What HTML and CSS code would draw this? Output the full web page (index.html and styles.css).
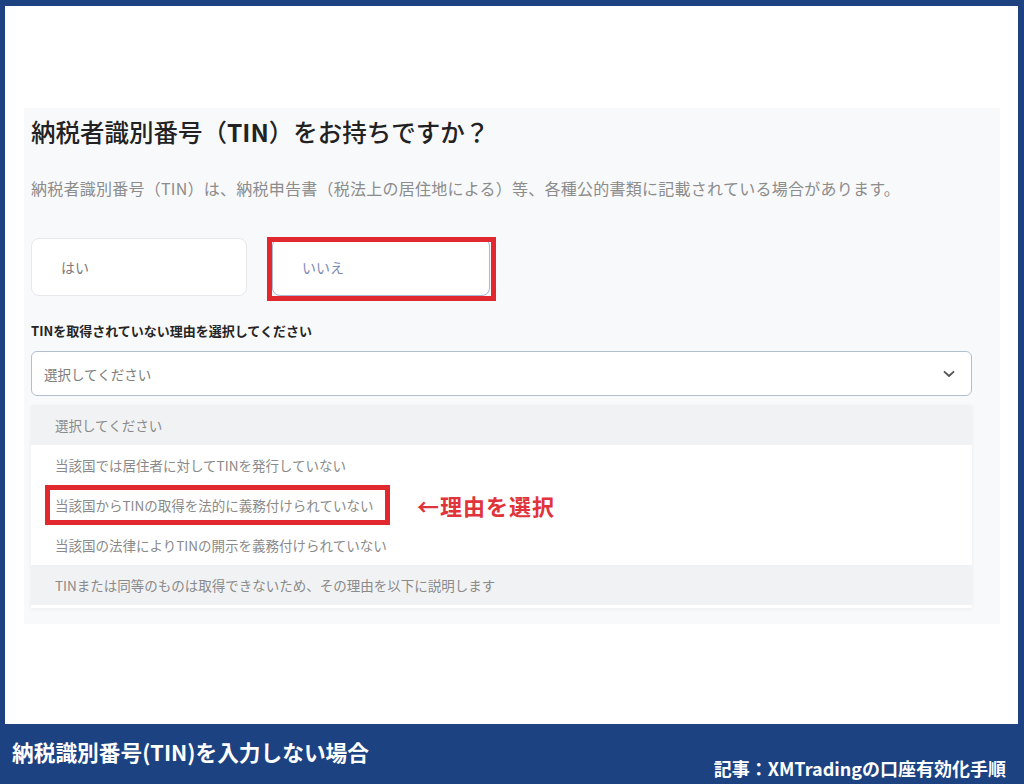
FILE: index.html
```html
<!DOCTYPE html>
<html lang="ja">
<head>
<meta charset="utf-8">
<title>納税識別番号(TIN)を入力しない場合</title>
<link rel="stylesheet" href="styles.css">
</head>
<body>
<div class="frame">
  <div class="canvas">
    <section class="card">
      <h1 class="title">納税者識別番号（<b class="tin">TIN</b>）をお持ちですか？</h1>
      <p class="desc">納税者識別番号（TIN）は、納税申告書（税法上の居住地による）等、各種公的書類に記載されている場合があります。</p>
      <div class="choices">
        <div class="choice">はい</div>
        <div class="choice selected">いいえ<span class="mark"></span></div>
      </div>
      <div class="label">TINを取得されていない理由を選択してください</div>
      <div class="select">
        <span class="placeholder">選択してください</span>
        <svg class="chev" width="12" height="8" viewBox="0 0 12 8"><polyline points="1.5,1.8 6,6 10.5,1.8" fill="none" stroke="#555" stroke-width="1.8" stroke-linecap="round" stroke-linejoin="round"/></svg>
      </div>
      <ul class="options">
        <li class="opt gray">選択してください</li>
        <li class="opt">当該国では居住者に対してTINを発行していない</li>
        <li class="opt marked">当該国からTINの取得を法的に義務付けられていない<span class="mark-box"></span><span class="note">←理由を選択</span></li>
        <li class="opt">当該国の法律によりTINの開示を義務付けられていない</li>
        <li class="opt gray">TINまたは同等のものは取得できないため、その理由を以下に説明します</li>
      </ul>
    </section>
  </div>
  <div class="bar">
    <span class="bar-title">納税識別番号(TIN)を入力しない場合</span>
    <span class="bar-sub">記事：XMTradingの口座有効化手順</span>
  </div>
</div>
</body>
</html>
```
FILE: styles.css
```css
html, body {
  margin: 0;
  padding: 0;
}
body {
  font-family: "Noto Sans CJK JP", "Noto Sans", sans-serif;
  background: #1d4282;
}
.frame {
  width: 1024px;
  height: 784px;
  background: #1d4282;
  display: flex;
  flex-direction: column;
  overflow: hidden;
}
.canvas {
  margin: 6px 6px 0 5px;
  height: 718px;
  background: #ffffff;
  padding: 102px 0 0 19px;
  box-sizing: border-box;
}
.card {
  width: 976px;
  height: 516px;
  box-sizing: border-box;
  background: #f8f9fb;
  padding: 8px 28px 16px 7px;
}
.title {
  margin: 0;
  font-size: 24.5px;
  line-height: 32px;
  font-weight: 500;
  color: #222222;
}
.tin {
  font-weight: 700;
}
.desc {
  margin: 28px 0 0;
  font-size: 16px;
  line-height: 24px;
  letter-spacing: 0.25px;
  color: #8c8c8c;
}
.choices {
  margin-top: 38px;
  display: flex;
  gap: 25px;
}
.choice {
  position: relative;
  width: 216px;
  height: 58px;
  box-sizing: border-box;
  border: 1px solid #e6e8ec;
  border-radius: 8px;
  background: #ffffff;
  padding-left: 29px;
  font-size: 14px;
  line-height: 56px;
  color: #7a7a7a;
}
.choice.selected {
  width: 218px;
  color: #7d89b6;
  border-color: #aab6d6;
}
.mark {
  position: absolute;
  left: -6px;
  top: -2px;
  width: 229px;
  height: 64px;
  box-sizing: border-box;
  border: 5px solid #e0282e;
}
.label {
  margin-top: 25px;
  font-size: 13px;
  line-height: 20px;
  font-weight: 700;
  color: #252525;
}
.select {
  margin-top: 10px;
  height: 45px;
  box-sizing: border-box;
  border: 1px solid #b3c0cc;
  border-radius: 6px;
  background: #ffffff;
  display: flex;
  align-items: center;
  justify-content: space-between;
  padding: 0 16px 0 12px;
}
.placeholder {
  font-size: 13.5px;
  color: #7c7c7c;
}
.options {
  list-style: none;
  margin: 9px 0 0;
  padding: 0 0 3px;
  background: #ffffff;
  box-shadow: 0 1px 4px rgba(0, 0, 0, 0.05);
}
.opt {
  position: relative;
  height: 40px;
  line-height: 40px;
  padding-left: 24px;
  font-size: 13.5px;
  color: #8a8a8a;
}
.opt.gray {
  background: #f1f2f4;
}
.mark-box {
  position: absolute;
  left: 14px;
  top: 0;
  width: 345px;
  height: 40px;
  box-sizing: border-box;
  border: 5px solid #e0282e;
}
.note {
  position: absolute;
  left: 386px;
  top: 0;
  line-height: 40px;
  font-size: 22px;
  font-weight: 700;
  letter-spacing: 1px;
  color: #e0333a;
}
.bar {
  height: 60px;
  display: flex;
  justify-content: space-between;
  align-items: flex-start;
  padding: 0 18px 0 12px;
  color: #ffffff;
  font-weight: 700;
}
.bar-title {
  margin-top: 13px;
  font-size: 21.7px;
  line-height: 30px;
}
.bar-sub {
  margin-top: 32px;
  font-size: 18px;
  line-height: 24px;
}
```
